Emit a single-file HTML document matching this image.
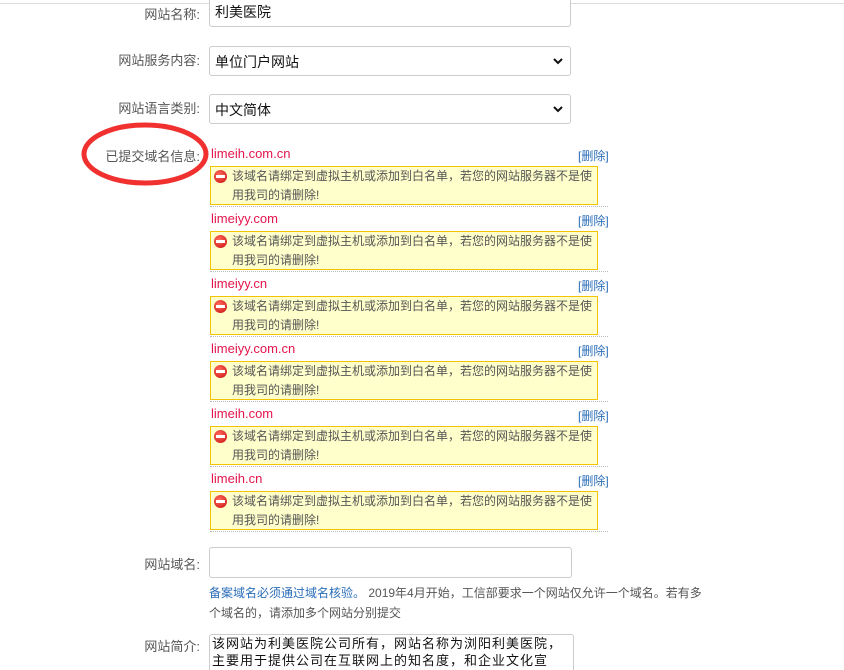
<!DOCTYPE html>
<html><head><meta charset="utf-8"><style>
html,body{overflow:hidden}
body{margin:0;width:844px;height:670px;overflow:hidden;background:#fff;font-family:"Liberation Sans","Noto Sans CJK SC",sans-serif;font-size:13px;color:#333;position:relative}
.a{position:absolute}
.topline{left:0;top:3px;width:844px;height:1px;background:#ddd}
.lab{width:200px;left:0;text-align:right;color:#555;font-size:13px}
.inp{left:209px;width:360px;border:1px solid #ccc;border-radius:3px;background:#fff;font-size:14px;color:#111;box-sizing:border-box;padding-left:5px}
.chev{position:absolute;right:6px;top:8px}
.dom{left:211px;color:#e4144b;font-size:13px}
.del{left:578px;color:#2a6db8;font-size:12px}
.box{left:210px;width:388px;height:39px;background:#ffffcc;border:1px solid #f2c400;box-sizing:border-box;color:#555;font-size:12px;line-height:19px;padding:0 0 0 21px;white-space:nowrap}
.ico{position:absolute;left:3px;top:3px;width:13px;height:13px;border-radius:50%;background:radial-gradient(circle at 40% 35%,#ff6a5a,#c80f0f)}
.ico:after{content:"";position:absolute;left:2px;top:5px;width:9px;height:3px;background:#fff}
.sep{left:210px;width:398px;border-top:1px dotted #bbb}
</style></head><body>
<div class="a topline"></div>

<div class="a lab" style="top:4px">网站名称:</div>
<div class="a inp" style="top:-2px;height:29px;line-height:27px;width:362px">利美医院</div>

<div class="a lab" style="top:50px">网站服务内容:</div>
<div class="a inp" style="top:46px;height:30px;line-height:30px;width:362px">单位门户网站<svg class="chev" width="12" height="12" viewBox="0 0 12 12"><path d="M2 4l4 4 4-4" fill="none" stroke="#111" stroke-width="2"/></svg></div>

<div class="a lab" style="top:98px">网站语言类别:</div>
<div class="a inp" style="top:94px;height:30px;line-height:30px;width:362px">中文简体<svg class="chev" width="12" height="12" viewBox="0 0 12 12"><path d="M2 4l4 4 4-4" fill="none" stroke="#111" stroke-width="2"/></svg></div>

<div class="a lab" style="top:146px">已提交域名信息:</div>
<svg class="a" style="left:80px;top:120px" width="132" height="70"><ellipse cx="65" cy="34" rx="61" ry="29" fill="none" stroke="#f0312f" stroke-width="5"/></svg>

<div class="a dom" style="top:146px">limeih.com.cn</div><div class="a del" style="top:147px">[删除]</div>
<div class="a box" style="top:166px"><span class="ico"></span>该域名请绑定到虚拟主机或添加到白名单，若您的网站服务器不是使<br>用我司的请删除!</div>
<div class="a sep" style="top:206px"></div>

<div class="a dom" style="top:211px">limeiyy.com</div><div class="a del" style="top:212px">[删除]</div>
<div class="a box" style="top:231px"><span class="ico"></span>该域名请绑定到虚拟主机或添加到白名单，若您的网站服务器不是使<br>用我司的请删除!</div>
<div class="a sep" style="top:271px"></div>

<div class="a dom" style="top:276px">limeiyy.cn</div><div class="a del" style="top:277px">[删除]</div>
<div class="a box" style="top:296px"><span class="ico"></span>该域名请绑定到虚拟主机或添加到白名单，若您的网站服务器不是使<br>用我司的请删除!</div>
<div class="a sep" style="top:336px"></div>

<div class="a dom" style="top:341px">limeiyy.com.cn</div><div class="a del" style="top:342px">[删除]</div>
<div class="a box" style="top:361px"><span class="ico"></span>该域名请绑定到虚拟主机或添加到白名单，若您的网站服务器不是使<br>用我司的请删除!</div>
<div class="a sep" style="top:401px"></div>

<div class="a dom" style="top:406px">limeih.com</div><div class="a del" style="top:407px">[删除]</div>
<div class="a box" style="top:426px"><span class="ico"></span>该域名请绑定到虚拟主机或添加到白名单，若您的网站服务器不是使<br>用我司的请删除!</div>
<div class="a sep" style="top:466px"></div>

<div class="a dom" style="top:471px">limeih.cn</div><div class="a del" style="top:472px">[删除]</div>
<div class="a box" style="top:491px"><span class="ico"></span>该域名请绑定到虚拟主机或添加到白名单，若您的网站服务器不是使<br>用我司的请删除!</div>
<div class="a sep" style="top:531px"></div>

<div class="a lab" style="top:554px">网站域名:</div>
<div class="a inp" style="top:547px;height:31px;width:363px"></div>
<div class="a" style="left:209px;top:583px;white-space:nowrap;line-height:20px;font-size:12px;color:#555"><span style="color:#2a6db8">备案域名必须通过域名核验。</span> 2019年4月开始，工信部要求一个网站仅允许一个域名。若有多<br>个域名的，请添加多个网站分别提交</div>

<div class="a lab" style="top:636px">网站简介:</div>
<div class="a inp" style="top:634px;height:60px;width:365px;padding:0 2px;font-size:13px;letter-spacing:1px;line-height:17px;color:#111;white-space:nowrap">该网站为利美医院公司所有，网站名称为浏阳利美医院，<br>主要用于提供公司在互联网上的知名度，和企业文化宣<br>传</div>
</body></html>
